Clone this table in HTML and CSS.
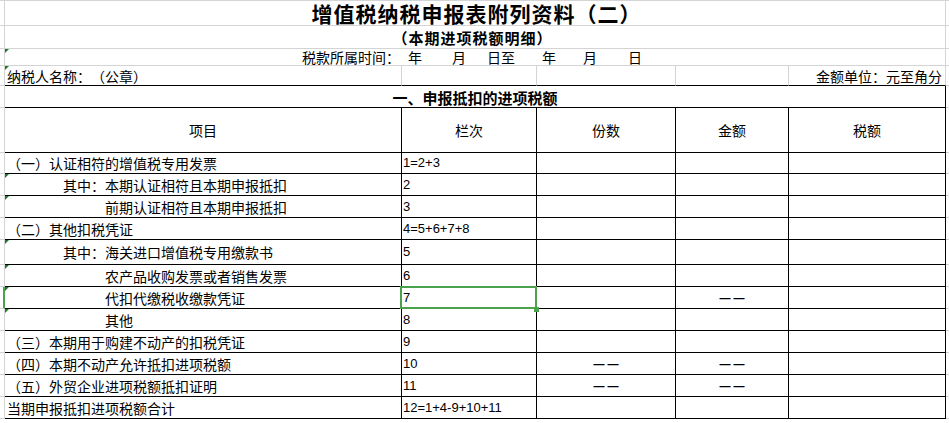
FILE: index.html
```html
<!DOCTYPE html>
<html lang="zh-CN">
<head>
<meta charset="utf-8">
<title>增值税纳税申报表附列资料（二）</title>
<link rel="stylesheet" href="styles.css">
</head>
<body>
<div class="sheet">
  <div class="row h25">
    <div class="stub"></div>
    <div class="cell span5 center title">增值税纳税申报表附列资料（二）</div>
    <div class="fill"></div>
  </div>
  <div class="row h23">
    <div class="stub"></div>
    <div class="cell span5 center subtitle">（本期进项税额明细）</div>
    <div class="fill"></div>
  </div>
  <div class="row h17">
    <div class="stub"></div>
    <div class="cell span5 period tri"><span>税款所属时间：</span><span class="g8">年</span><span class="g30">月</span><span class="g21">日至</span><span class="g27">年</span><span class="g27">月</span><span class="g31">日</span></div>
    <div class="fill"></div>
  </div>
  <div class="row h20 bottom-black">
    <div class="stub"></div>
    <div class="cell tri pl2">纳税人名称：（公章）</div>
    <div class="cell"></div>
    <div class="cell"></div>
    <div class="cell"></div>
    <div class="cell right">金额单位：元至角分</div>
    <div class="fill"></div>
  </div>
  <div class="row h22 blk">
    <div class="stub"></div>
    <div class="cell span5 center section">一、申报抵扣的进项税额</div>
    <div class="fill"></div>
  </div>
  <div class="row h45 blk">
    <div class="stub"></div>
    <div class="cell center">项目</div>
    <div class="cell center">栏次</div>
    <div class="cell center">份数</div>
    <div class="cell center">金额</div>
    <div class="cell center">税额</div>
    <div class="fill"></div>
  </div>
  <div class="row h21 blk">
    <div class="stub"></div>
    <div class="cell pl2">（一）认证相符的增值税专用发票</div>
    <div class="cell num">1=2+3</div>
    <div class="cell"></div><div class="cell"></div><div class="cell"></div>
    <div class="fill"></div>
  </div>
  <div class="row h22 blk">
    <div class="stub"></div>
    <div class="cell tri in1">其中：本期认证相符且本期申报抵扣</div>
    <div class="cell num">2</div>
    <div class="cell"></div><div class="cell"></div><div class="cell"></div>
    <div class="fill"></div>
  </div>
  <div class="row h22 blk">
    <div class="stub"></div>
    <div class="cell tri in2">前期认证相符且本期申报抵扣</div>
    <div class="cell num">3</div>
    <div class="cell"></div><div class="cell"></div><div class="cell"></div>
    <div class="fill"></div>
  </div>
  <div class="row h22 blk">
    <div class="stub"></div>
    <div class="cell pl2">（二）其他扣税凭证</div>
    <div class="cell num">4=5+6+7+8</div>
    <div class="cell"></div><div class="cell"></div><div class="cell"></div>
    <div class="fill"></div>
  </div>
  <div class="row h25 blk">
    <div class="stub"></div>
    <div class="cell tri in1">其中：海关进口增值税专用缴款书</div>
    <div class="cell num">5</div>
    <div class="cell"></div><div class="cell"></div><div class="cell"></div>
    <div class="fill"></div>
  </div>
  <div class="row h22 blk">
    <div class="stub"></div>
    <div class="cell tri in2">农产品收购发票或者销售发票</div>
    <div class="cell num">6</div>
    <div class="cell"></div><div class="cell"></div><div class="cell"></div>
    <div class="fill"></div>
  </div>
  <div class="row h22 blk">
    <div class="stub sel"></div>
    <div class="cell tri in2">代扣代缴税收缴款凭证</div>
    <div class="cell num selected">7</div>
    <div class="cell"></div>
    <div class="cell center"><span class="dash">——</span></div>
    <div class="cell"></div>
    <div class="fill"></div>
  </div>
  <div class="row h22 blk">
    <div class="stub"></div>
    <div class="cell tri in2">其他</div>
    <div class="cell num">8</div>
    <div class="cell"></div><div class="cell"></div><div class="cell"></div>
    <div class="fill"></div>
  </div>
  <div class="row h22 blk">
    <div class="stub"></div>
    <div class="cell pl2">（三）本期用于购建不动产的扣税凭证</div>
    <div class="cell num">9</div>
    <div class="cell"></div><div class="cell"></div><div class="cell"></div>
    <div class="fill"></div>
  </div>
  <div class="row h22 blk">
    <div class="stub"></div>
    <div class="cell pl2">（四）本期不动产允许抵扣进项税额</div>
    <div class="cell num">10</div>
    <div class="cell center"><span class="dash">——</span></div>
    <div class="cell center"><span class="dash">——</span></div>
    <div class="cell"></div>
    <div class="fill"></div>
  </div>
  <div class="row h22 blk">
    <div class="stub"></div>
    <div class="cell pl2">（五）外贸企业进项税额抵扣证明</div>
    <div class="cell num">11</div>
    <div class="cell center"><span class="dash">——</span></div>
    <div class="cell center"><span class="dash">——</span></div>
    <div class="cell"></div>
    <div class="fill"></div>
  </div>
  <div class="row h22 blk">
    <div class="stub"></div>
    <div class="cell pl2">当期申报抵扣进项税额合计</div>
    <div class="cell num">12=1+4-9+10+11</div>
    <div class="cell"></div><div class="cell"></div><div class="cell"></div>
    <div class="fill"></div>
  </div>
</div>
</body>
</html>
```

FILE: styles.css
```css
* {
  box-sizing: border-box;
  margin: 0;
  padding: 0;
}

html, body {
  background: #ffffff;
}

body {
  margin: 0;
  font-family: "Noto Sans CJK SC", "Noto Sans CJK JP", sans-serif;
  font-size: 14px;
  line-height: 16px;
  color: #000000;
  overflow: hidden;
  text-spacing-trim: space-all;
}

.sheet {
  width: 949px;
  border-top: 1px solid #d4d4d4;
}

.row {
  display: grid;
  grid-template-columns: 5px 397px 135px 139px 113px 157px 1fr;
}

.h17 { height: 17px; }
.h20 { height: 20px; }
.h21 { height: 21px; }
.h22 { height: 22px; }
.h23 { height: 23px; }
.h25 { height: 25px; }
.h45 { height: 45px; }

.row > div {
  display: flex;
  align-items: center;
  white-space: nowrap;
  border-right: 1px solid #d4d4d4;
  border-bottom: 1px solid #d4d4d4;
  position: relative;
}

.row > .fill {
  border-right: none;
}

.span5 {
  grid-column: span 5;
}

.bottom-black > .cell {
  border-bottom-color: #000000;
}

.blk > .cell {
  border-bottom-color: #000000;
  border-right-color: #000000;
}

.center {
  justify-content: center;
}

.right {
  justify-content: flex-end;
  padding-right: 3px;
}

.pl2 {
  padding-left: 2px;
}

.in1 {
  padding-left: 58px;
}

.in2 {
  padding-left: 100px;
}

.title {
  font-size: 21px;
  font-weight: 700;
  line-height: 22px;
  letter-spacing: 1px;
  padding-left: 3px;
}

.subtitle {
  font-size: 15px;
  font-weight: 700;
  line-height: 17px;
  letter-spacing: 1px;
  padding-right: 5px;
}

.section {
  font-size: 15px;
  font-weight: 700;
  line-height: 17px;
  padding-top: 2px;
}

.period {
  padding-left: 297px;
  line-height: 14px;
}

.g8 { margin-left: 8px; }
.g21 { margin-left: 21px; }
.g27 { margin-left: 27px; }
.g30 { margin-left: 30px; }
.g31 { margin-left: 31px; }

.num {
  font-family: "Liberation Sans", Arial, sans-serif;
  font-size: 13px;
  padding-left: 1px;
}

.dash {
  font-family: "Liberation Sans", Arial, sans-serif;
  font-size: 11px;
  font-weight: 700;
  letter-spacing: 3px;
  padding-left: 3px;
}

.tri::before {
  content: "";
  position: absolute;
  top: 0;
  left: 0;
  width: 0;
  height: 0;
  border-top: 4px solid #217a2a;
  border-right: 4px solid transparent;
}

.stub.sel {
  border-right-color: #4ca24c;
  box-shadow: inset -1px 0 0 #4ca24c;
}

.selected::after {
  content: "";
  position: absolute;
  top: -1px;
  left: -2px;
  right: -1px;
  bottom: -1px;
  border: 2px solid #4ca24c;
  z-index: 2;
}

.selected::before {
  content: "";
  position: absolute;
  right: -3px;
  bottom: -4px;
  width: 5px;
  height: 5px;
  background: #4ca24c;
  z-index: 3;
}
```
